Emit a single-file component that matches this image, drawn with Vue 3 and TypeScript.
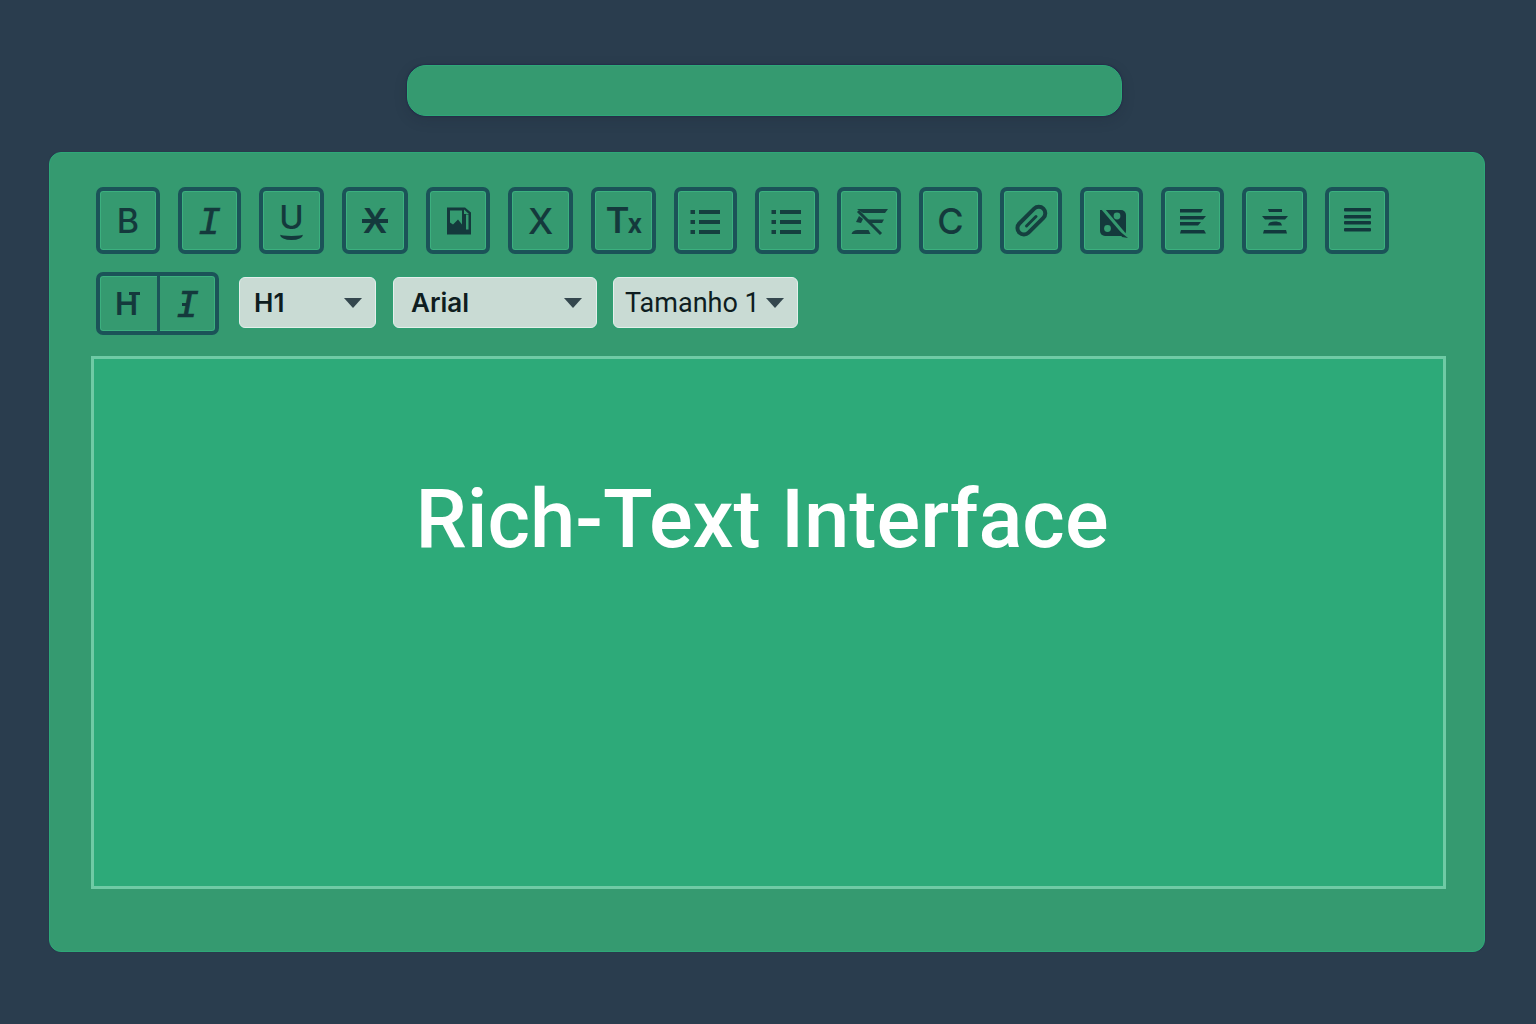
<script setup lang="ts">
interface Tool { name: string; width: number; text?: string; cls?: string }

const tools: Tool[] = [
  { name: 'bold', width: 64, text: 'B', cls: 'sans' },
  { name: 'italic', width: 63, text: 'I', cls: 'slab' },
  { name: 'underline', width: 65, text: 'U', cls: 'under' },
  { name: 'strike', width: 66, text: 'X', cls: 'struck' },
  { name: 'image', width: 64 },
  { name: 'x', width: 65, text: 'X', cls: 'sans big' },
  { name: 'clear', width: 65, cls: 'clear' },
  { name: 'list1', width: 63 },
  { name: 'list2', width: 64 },
  { name: 'noformat', width: 64 },
  { name: 'c', width: 63, text: 'C', cls: 'sans big' },
  { name: 'clip', width: 62 },
  { name: 'noimage', width: 63 },
  { name: 'left', width: 63 },
  { name: 'center', width: 65 },
  { name: 'justify', width: 64 },
]

const lists = ['list1', 'list2']
const selects = [
  { label: 'H1', cls: 'sel-h' },
  { label: 'Arial', cls: 'sel-font' },
  { label: 'Tamanho 1', cls: 'sel-size' },
]
</script>

<template>
  <main class="page">
    <div class="title-bar"></div>
    <section class="card">
      <div class="toolbar">
        <div class="row">
          <button
            v-for="t in tools"
            :key="t.name"
            class="tool"
            :class="t.cls"
            :style="{ width: t.width + 'px' }"
            type="button"
          >
            <span v-if="t.text" class="glyph">{{ t.text }}</span>
            <span v-else-if="t.name === 'clear'" class="glyph">T<small>x</small></span>
            <svg v-else-if="t.name === 'image'" class="icon" viewBox="0 0 40 40">
              <g transform="translate(1 -1.500)">
                <path d="M8 8h18l6 5v22H8z" fill="#14393c" />
                <path d="M11 11h12v14l-4-5-5 5-3-2z" fill="#359a70" />
                <path d="M27 15h2.500v15H27z" fill="#359a70" />
                <path d="M25 10l5 4.500h-5z" fill="#359a70" />
              </g>
            </svg>
            <svg v-else-if="lists.includes(t.name)" class="icon" viewBox="0 0 40 40" fill="#15403f">
              <rect x="4.500" y="9" width="4.500" height="4" />
              <rect x="4.500" y="19" width="4.500" height="4" />
              <rect x="4.500" y="29" width="4.500" height="4" />
              <rect x="13" y="9" width="21" height="4" />
              <rect x="13" y="19" width="21" height="4" />
              <rect x="13" y="29" width="21" height="4" />
            </svg>
            <svg v-else-if="t.name === 'noformat'" class="icon" viewBox="0 0 40 40" fill="#15403f">
              <path d="M8 8h31l-3 4H14z" />
              <path d="M17 18.500h18l-2 3.500H21z" />
              <path d="M2.500 33c1-3 3-4 6-4h11l2 4z" />
              <path d="M9 10l23 23" stroke="#15403f" stroke-width="3" />
              <path d="M7 21l3-6 4 3-2 4z" />
            </svg>
            <svg v-else-if="t.name === 'clip'" class="icon" viewBox="0 0 40 40" fill="none" stroke="#15403f">
              <rect x="3.500" y="13.500" width="34" height="13" rx="6.500" stroke-width="4" transform="rotate(-45 20 20)" />
              <path d="M15.500 25L25 15.500" stroke-width="3" stroke-linecap="round" />
            </svg>
            <svg v-else-if="t.name === 'noimage'" class="icon" viewBox="0 0 40 40">
              <path d="M8 9h21a5 5 0 0 1 5 5v16a5 5 0 0 1-5 5H13a5 5 0 0 1-5-5z" fill="#14393c" />
              <circle cx="25" cy="15" r="3.400" fill="#359a70" />
              <circle cx="15.500" cy="27.500" r="3.400" fill="#359a70" />
              <path d="M11 8l23 27" stroke="#359a70" stroke-width="3" />
              <path d="M26 29l10 8-6-1z" fill="#14393c" />
            </svg>
            <svg v-else-if="t.name === 'left'" class="icon" viewBox="0 0 40 40" fill="#12383c">
              <path d="M7 8h23l-2 3.500H7z" />
              <path d="M7 15h26l-3 3.500H7z" />
              <path d="M7 21h21l-3 3.500H7z" />
              <path d="M8 29h23l2 3.500H7z" />
            </svg>
            <svg v-else-if="t.name === 'center'" class="icon" viewBox="0 0 40 40" fill="#12383c">
              <path d="M13 8h14v3H14z" />
              <path d="M7 15h26l-3 3.500H10z" />
              <path d="M14 22c3-2 9-2 12 0l1 2.500H13z" />
              <path d="M9 29h22l1 3.500H8z" />
            </svg>
            <svg v-else-if="t.name === 'justify'" class="icon" viewBox="0 0 40 40" fill="#12383c">
              <rect x="7" y="7" width="27" height="3.500" rx="1" />
              <rect x="7" y="14" width="27" height="3.500" rx="1" />
              <rect x="7" y="20" width="27" height="3.500" rx="1" />
              <rect x="7" y="27" width="27" height="3.500" rx="1" />
            </svg>
          </button>
        </div>
        <div class="row second">
          <div class="group">
            <button class="seg seg-h" type="button"><span class="glyph">H</span></button>
            <button class="seg seg-i" type="button"><span class="glyph">I</span></button>
          </div>
          <div v-for="s in selects" :key="s.label" class="select" :class="s.cls">
            <span>{{ s.label }}</span>
            <i class="caret"></i>
          </div>
        </div>
      </div>
      <div class="editor">
        <h1>Rich-Text Interface</h1>
      </div>
    </section>
  </main>
</template>

<style>
html, body { margin: 0; background: #2a3d4e; }
</style>

<style scoped>
.page {
  box-sizing: border-box;
  width: 1536px;
  height: 1024px;
  padding: 65px 51px 0 49px;
  background: #2a3d4e;
  font-family: Roboto, "Liberation Sans", sans-serif;
}
.title-bar {
  box-sizing: border-box;
  width: 715px;
  height: 51px;
  margin-left: 358px;
  border: 1px solid #2ea878;
  border-radius: 19px;
  background: #359a70;
  box-shadow: 0 0 1px 1px rgba(37, 43, 74, .7), 0 4px 14px rgba(20, 30, 40, .15);
}
.card {
  box-sizing: border-box;
  height: 800px;
  margin-top: 36px;
  padding: 34px 38px 0 41px;
  border: 1px solid #2ea878;
  border-radius: 12px;
  background: #359a70;
  box-shadow: 0 0 1px rgba(37, 43, 74, .9);
}
.toolbar { padding-left: 5px; }
.row { display: flex; gap: 18px; }
.second { align-items: center; gap: 0; margin-top: 18px; }
.tool, .group {
  box-sizing: border-box;
  border: 4px solid #1b5358;
  border-radius: 7px;
  background: transparent;
  box-shadow: inset 0 0 0 1px #3cb07f;
}
.tool {
  display: flex;
  align-items: center;
  justify-content: center;
  height: 67px;
  padding: 0;
}
.glyph {
  color: #14393c;
  font-family: Inter, Roboto, sans-serif;
  font-size: 34px;
  font-weight: 500;
  line-height: 1;
}
.big .glyph { font-size: 36px; }
.slab .glyph, .seg-i .glyph {
  position: relative;
  top: 3px;
  font-family: "Liberation Mono", monospace;
  font-style: italic;
  font-weight: 400;
  font-size: 38px;
  -webkit-text-stroke: .7px #14393c;
}
.under .glyph { position: relative; top: -3px; font-size: 33px; }
.under .glyph::after {
  content: "";
  position: absolute;
  left: 1px;
  right: 1px;
  bottom: -6px;
  height: 7px;
  border-bottom: 4px solid #14393c;
  border-radius: 0 0 50% 50%;
}
.struck .glyph { position: relative; font-size: 34px; font-weight: 600; }
.struck .glyph::after {
  content: "";
  position: absolute;
  left: -1px;
  right: -1px;
  top: 15px;
  height: 4px;
  background: #14393c;
}
.clear .glyph { font-family: Roboto, sans-serif; font-size: 37px; font-weight: 500; letter-spacing: -1px; }
.clear small { font-size: 28px; font-weight: 600; }
.icon { width: 40px; height: 40px; }
.group { display: flex; width: 123px; height: 63px; margin-right: 20px; }
.seg {
  display: flex;
  align-items: center;
  justify-content: center;
  height: 100%;
  padding: 0;
  border: 0;
  background: transparent;
}
.seg-h { width: 60px; border-right: 3px solid #1b5358; }
.seg-i { flex: 1; }
.seg-h .glyph { position: relative; left: -2px; font-weight: 600; font-size: 31px; }
.seg-h .glyph::after, .seg-i .glyph::after {
  content: "";
  position: absolute;
  left: 60%;
  right: -2px;
  top: 4px;
  height: 3px;
  background: #14393c;
}
.seg-i .glyph::after { top: 15px; left: 6px; right: auto; width: 6px; }
.select {
  box-sizing: border-box;
  display: flex;
  align-items: center;
  justify-content: space-between;
  height: 51px;
  margin-bottom: 2px;
  border: 1px solid #e4efeb;
  border-radius: 6px;
  background: #c9dbd4;
  color: #0e1d1f;
  font-size: 27px;
  box-shadow: 0 0 0 1px #2f9f73;
}
.sel-h, .sel-font { font-family: Inter, Roboto, sans-serif; font-weight: 600; font-size: 26px; }
.sel-h { width: 137px; margin-right: 17px; padding: 0 13px 0 14px; }
.sel-font { width: 204px; margin-right: 16px; padding: 0 14px 0 17px; }
.sel-size { width: 185px; padding: 0 13px 0 11px; }
.caret {
  width: 0;
  height: 0;
  border-left: 9px solid transparent;
  border-right: 9px solid transparent;
  border-top: 10px solid #34474e;
}
.editor {
  box-sizing: border-box;
  display: flex;
  justify-content: center;
  height: 533px;
  margin-top: 21px;
  padding: 113px 13px 0 0;
  border: 3px solid #6fcaa5;
  background: #2daa79;
}
h1 {
  margin: 0;
  color: #fff;
  font-family: Roboto, sans-serif;
  font-size: 81.500px;
  font-weight: 500;
  line-height: 94px;
}
</style>
